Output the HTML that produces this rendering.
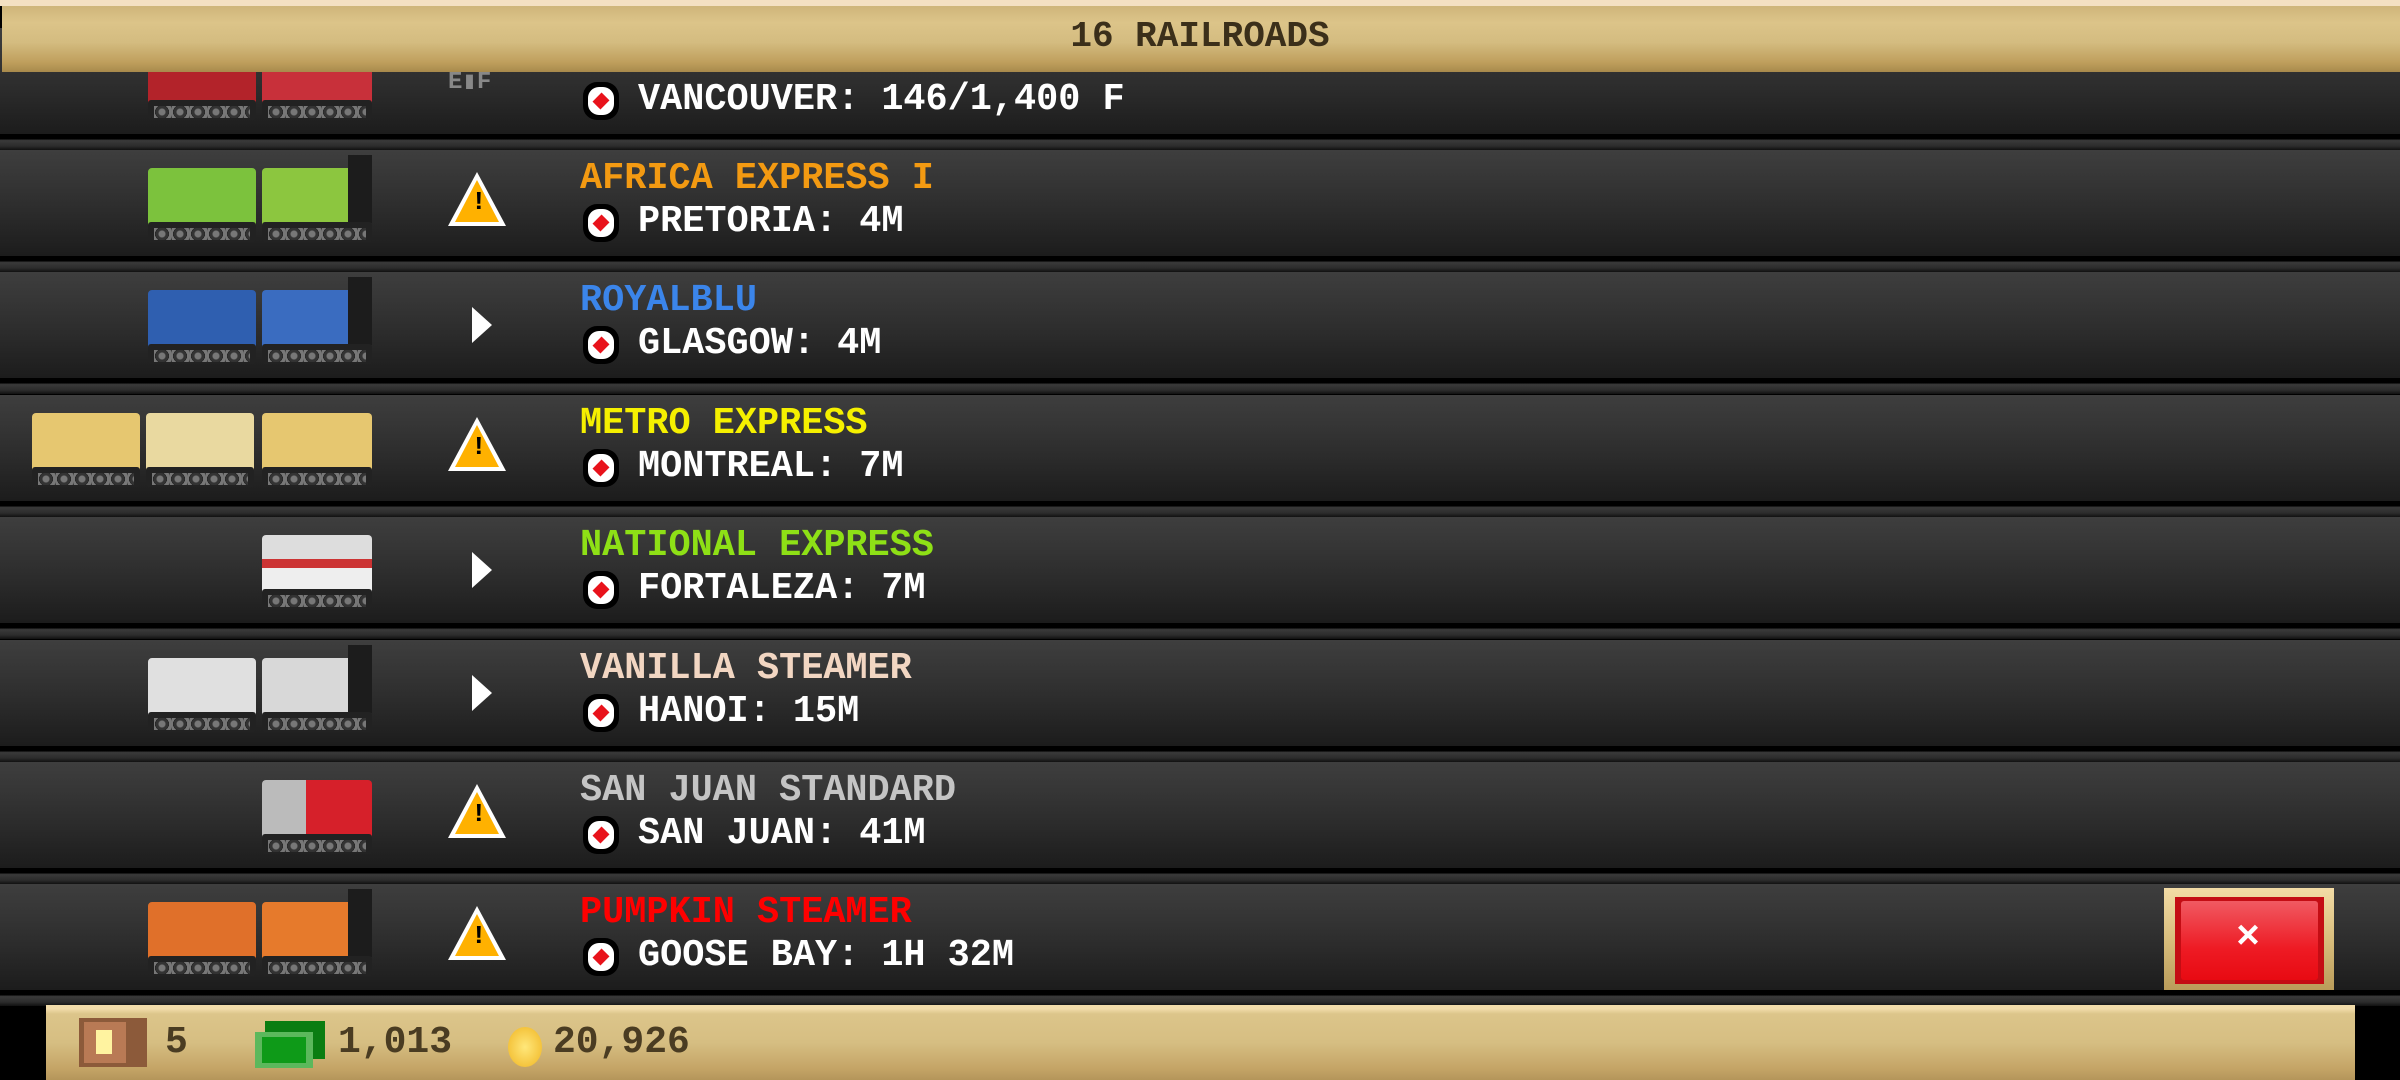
<!DOCTYPE html>
<html><head><meta charset="utf-8"><style>
*{margin:0;padding:0;box-sizing:border-box}
body{width:2400px;height:1080px;background:#000;position:relative;overflow:hidden;font-family:"Liberation Mono",monospace;font-weight:bold}
.row{position:absolute;left:0;width:2400px;height:106px;background:linear-gradient(#3e3e3e,#353535 30%,#2b2b2b 60%,#1c1c1c)}
.sep{position:absolute;left:0;width:2400px;height:16px;background:linear-gradient(#000 0,#000 30%,#3a3a3a 40%,#2c2c2c 75%,#111 100%)}
.t{position:absolute;left:580px;top:9px;font-size:38px;letter-spacing:0px;line-height:40px;transform:scaleX(.97);transform-origin:left}
.s{position:absolute;left:638px;top:52px;font-size:38px;line-height:40px;color:#fff;transform:scaleX(.97);transform-origin:left}
.dot{position:absolute;left:583px;top:54px;width:36px;height:38px;background:#000;border-radius:14px}
.dot::before{content:"";position:absolute;left:5px;top:5px;width:26px;height:28px;background:#fff;border-radius:11px}
.dot::after{content:"";position:absolute;left:11px;top:11px;width:14px;height:16px;background:#e8121b;transform:rotate(45deg) scale(.8)}
.warn{position:absolute;left:448px;top:22px;width:0;height:0;border-left:29px solid transparent;border-right:29px solid transparent;border-bottom:54px solid #fff}
.warn::before{content:"";position:absolute;left:-22px;top:8px;border-left:22px solid transparent;border-right:22px solid transparent;border-bottom:42px solid #ffb100}
.warn::after{content:"!";position:absolute;left:-6px;top:16px;color:#000;font-size:26px;line-height:28px}
.play{position:absolute;left:472px;top:35px;border-top:18px solid transparent;border-bottom:18px solid transparent;border-left:20px solid #fff}
.car{position:absolute;top:18px;height:60px;border-radius:4px}
.ch{position:absolute;top:72px;height:20px;background:#222;border-radius:3px}
.ch::after{content:"";position:absolute;left:6px;right:6px;top:6px;height:12px;background:repeating-radial-gradient(circle at 8px 6px,#777 0 3px,#333 4px 6px,#222 7px);background-size:18px 12px}
.stack{position:absolute;top:5px;width:12px;height:68px;background:#1c1c1c}
.f{position:absolute;font-size:38px;color:#4a3c22;top:1023px;line-height:40px}
</style></head><body>

<div class="row" style="top:28px"><div class="car" style="left:148px;width:108px;background:#b3232a"></div><div class="ch" style="left:148px;width:108px"></div><div class="car" style="left:262px;width:110px;background:#c8303a"></div><div class="ch" style="left:262px;width:110px"></div>
<div style="position:absolute;left:448px;top:38px;font-size:24px;color:#888">E▮F</div>
<div class="dot"></div><div class="s">VANCOUVER: 146/1,400 F</div></div>
<div class="sep" style="top:134px"></div>

<div class="row" style="top:150px"><div class="car" style="left:148px;width:108px;background:#7cc23d"></div><div class="ch" style="left:148px;width:108px"></div><div class="car" style="left:262px;width:95px;background:#8cc63f"></div><div class="stack" style="left:348px;width:24px"></div><div class="ch" style="left:262px;width:110px"></div>
<div class="warn"></div><div class="t" style="color:#f39a12">AFRICA EXPRESS I</div><div class="dot"></div><div class="s">PRETORIA: 4M</div></div>
<div class="sep" style="top:256px"></div>

<div class="row" style="top:272px"><div class="car" style="left:148px;width:108px;background:#2f5fb0"></div><div class="ch" style="left:148px;width:108px"></div><div class="car" style="left:262px;width:95px;background:#3a6cc0"></div><div class="stack" style="left:348px;width:24px"></div><div class="ch" style="left:262px;width:110px"></div>
<div class="play"></div><div class="t" style="color:#3b85ea">ROYALBLU</div><div class="dot"></div><div class="s">GLASGOW: 4M</div></div>
<div class="sep" style="top:378px"></div>

<div class="row" style="top:395px"><div class="car" style="left:32px;width:108px;background:#e6c770"></div><div class="ch" style="left:32px;width:108px"></div><div class="car" style="left:146px;width:108px;background:#e9d9a0"></div><div class="ch" style="left:146px;width:108px"></div><div class="car" style="left:262px;width:110px;background:#e6c770"></div><div class="ch" style="left:262px;width:110px"></div>
<div class="warn"></div><div class="t" style="color:#f5f000">METRO EXPRESS</div><div class="dot"></div><div class="s">MONTREAL: 7M</div></div>
<div class="sep" style="top:501px"></div>

<div class="row" style="top:517px"><div class="car" style="left:262px;width:110px;background:linear-gradient(#ddd 0 40%,#c33 40% 55%,#eee 55%)"></div><div class="ch" style="left:262px;width:110px"></div>
<div class="play"></div><div class="t" style="color:#8ee016">NATIONAL EXPRESS</div><div class="dot"></div><div class="s">FORTALEZA: 7M</div></div>
<div class="sep" style="top:623px"></div>

<div class="row" style="top:640px"><div class="car" style="left:148px;width:108px;background:#e0e0e0"></div><div class="ch" style="left:148px;width:108px"></div><div class="car" style="left:262px;width:95px;background:#d8d8d8"></div><div class="stack" style="left:348px;width:24px"></div><div class="ch" style="left:262px;width:110px"></div>
<div class="play"></div><div class="t" style="color:#f2d6c2">VANILLA STEAMER</div><div class="dot"></div><div class="s">HANOI: 15M</div></div>
<div class="sep" style="top:746px"></div>

<div class="row" style="top:762px"><div class="car" style="left:262px;width:110px;background:linear-gradient(90deg,#bbb 0 40%,#d6202a 40%)"></div><div class="ch" style="left:262px;width:110px"></div>
<div class="warn"></div><div class="t" style="color:#c4c4c4">SAN JUAN STANDARD</div><div class="dot"></div><div class="s">SAN JUAN: 41M</div></div>
<div class="sep" style="top:868px"></div>

<div class="row" style="top:884px"><div class="car" style="left:148px;width:108px;background:#e0702a"></div><div class="ch" style="left:148px;width:108px"></div><div class="car" style="left:262px;width:95px;background:#e67a2c"></div><div class="stack" style="left:348px;width:24px"></div><div class="ch" style="left:262px;width:110px"></div>
<div class="warn"></div><div class="t" style="color:#ff0000">PUMPKIN STEAMER</div><div class="dot"></div><div class="s">GOOSE BAY: 1H 32M</div>
<div style="position:absolute;left:2164px;top:4px;width:170px;height:105px;background:linear-gradient(#f3dca6,#d8bd7c 50%,#b89a58);"></div>
<div style="position:absolute;left:2175px;top:13px;width:149px;height:87px;background:#c40d14"></div>
<div style="position:absolute;left:2181px;top:17px;width:137px;height:79px;background:linear-gradient(#f05a62,#ee1b24 60%,#e80a12);border-radius:3px"></div>
<div style="position:absolute;left:2236px;top:30px;color:#fff;font-size:40px;line-height:50px">×</div></div>
<div class="sep" style="top:990px"></div>

<div style="position:absolute;left:0;top:0;width:2400px;height:6px;background:#f4e0c2"></div>
<div style="position:absolute;left:2px;top:6px;width:2398px;height:66px;background:linear-gradient(#cfb57a,#dcc489 25%,#d4bc80 55%,#bf9f5d 85%,#a88a4c)"></div>
<div style="position:absolute;left:0;width:2400px;top:17px;text-align:center;font-size:36px;color:#3b2f1a;line-height:40px">16 RAILROADS</div>

<div style="position:absolute;left:46px;top:1005px;width:2309px;height:75px;background:linear-gradient(#f2dcaa 0,#f2dcaa 5%,#dcc58a 12%,#d6be82 50%,#c4a466 85%,#b4955a)"></div>
<div style="position:absolute;left:79px;top:1018px;width:68px;height:49px;background:#8c5a3a"></div>
<div style="position:absolute;left:84px;top:1022px;width:42px;height:41px;background:#b97a55"></div>
<div style="position:absolute;left:96px;top:1030px;width:16px;height:24px;background:#fff3a0"></div>
<div class="f" style="left:165px">5</div>
<div style="position:absolute;left:265px;top:1021px;width:60px;height:38px;background:#0b7d12"></div>
<div style="position:absolute;left:255px;top:1032px;width:58px;height:36px;background:#5cb85c"></div>
<div style="position:absolute;left:262px;top:1037px;width:44px;height:26px;background:#0e9a18"></div>
<div class="f" style="left:338px">1,013</div>
<div style="position:absolute;left:508px;top:1027px;width:34px;height:40px;border-radius:50%;background:radial-gradient(#ffe77a,#f0b522)"></div>
<div class="f" style="left:553px">20,926</div>
</body></html>
